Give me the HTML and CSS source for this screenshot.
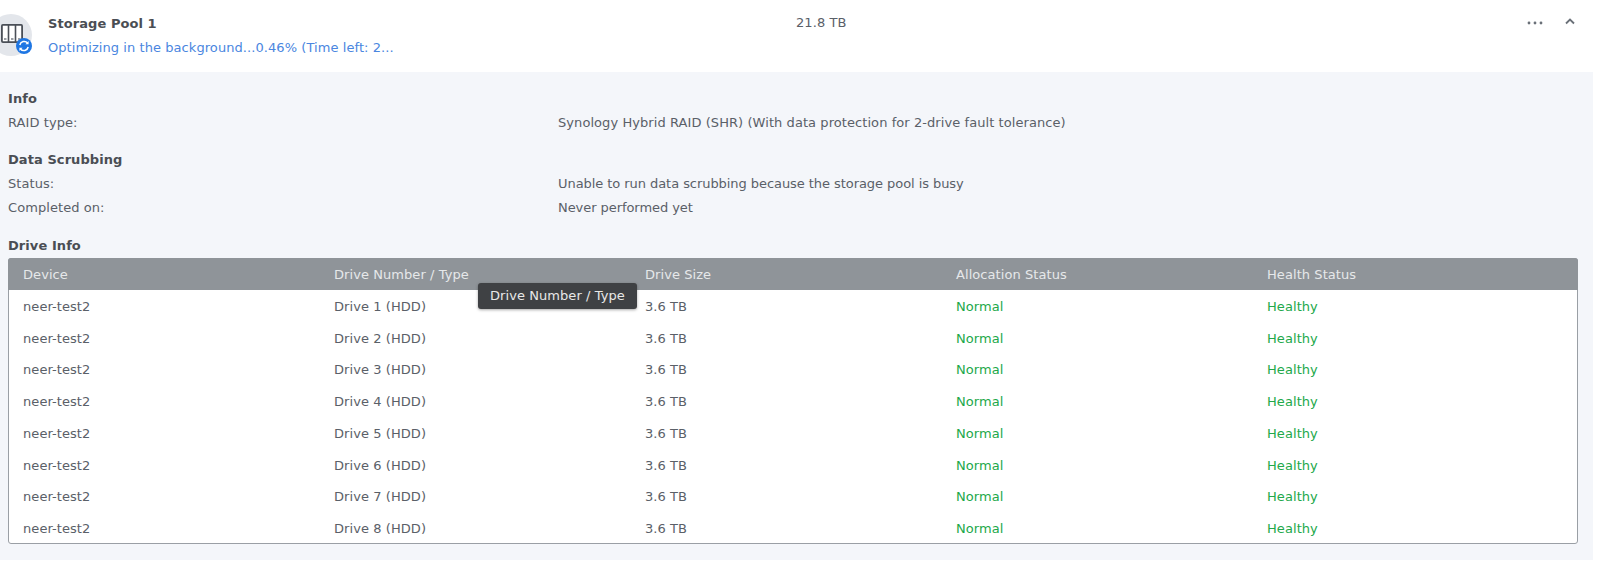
FILE: index.html
```html
<!DOCTYPE html>
<html lang="en">
<head>
<meta charset="utf-8">
<title>Storage Pool 1</title>
<link rel="stylesheet" href="styles.css">
</head>
<body>
<div class="panel">
  <header class="pool">
    <div class="pool-icon">
      <svg width="34" height="42" viewBox="0 0 34 42">
        <circle cx="11" cy="21" r="21" fill="#e3e6eb"/>
        <rect x="1.900" y="10.900" width="20.200" height="17.200" rx="1" fill="#fff" stroke="#4a4f57" stroke-width="1.800"/>
        <path d="M8.500 11v17M15.500 11v17" stroke="#4a4f57" stroke-width="1.600"/>
        <path d="M4 25h2.500M11 25h2.500M18 25h2.500" stroke="#7b8088" stroke-width="1.600"/>
        <circle cx="24" cy="32" r="8" fill="#1e76e3"/>
        <path d="M19.800 31a4.500 4.500 0 0 1 7.800-2M28.200 33a4.500 4.500 0 0 1-7.800 2" fill="none" stroke="#fff" stroke-width="1.500"/>
        <path d="M28.600 27v3.200h-3.200zM19.400 37v-3.200h3.200z" fill="#fff"/>
      </svg>
    </div>
    <div class="pool-name">
      <div class="title">Storage Pool 1</div>
      <div class="progress">Optimizing in the background...0.46% (Time left: 2...</div>
    </div>
    <div class="pool-size">21.8 TB</div>
    <div class="pool-actions">
      <svg class="more" width="16" height="4" viewBox="0 0 16 4"><circle cx="2" cy="2" r="1.400"/><circle cx="8" cy="2" r="1.400"/><circle cx="14" cy="2" r="1.400"/></svg>
      <svg class="collapse" width="12" height="8" viewBox="0 0 12 8"><path d="M2 6.500 6 2.500l4 4"/></svg>
    </div>
  </header>
  <section class="details">
    <h3 class="heading">Info</h3>
    <div class="info-row"><span class="key">RAID type:</span><span>Synology Hybrid RAID (SHR) (With data protection for 2-drive fault tolerance)</span></div>
    <h3 class="heading spaced">Data Scrubbing</h3>
    <div class="info-row"><span class="key">Status:</span><span class="tight">Unable to run data scrubbing because the storage pool is busy</span></div>
    <div class="info-row"><span class="key">Completed on:</span><span class="tight">Never performed yet</span></div>
    <h3 class="heading spaced last">Drive Info</h3>
    <div class="table">
      <div class="row head"><span>Device</span><span class="has-tip">Drive Number / Type<span class="tip">Drive Number / Type</span></span><span>Drive Size</span><span>Allocation Status</span><span>Health Status</span></div>
      <div class="row"><span>neer-test2</span><span>Drive 1 (HDD)</span><span>3.6 TB</span><span class="ok">Normal</span><span class="ok">Healthy</span></div>
      <div class="row"><span>neer-test2</span><span>Drive 2 (HDD)</span><span>3.6 TB</span><span class="ok">Normal</span><span class="ok">Healthy</span></div>
      <div class="row"><span>neer-test2</span><span>Drive 3 (HDD)</span><span>3.6 TB</span><span class="ok">Normal</span><span class="ok">Healthy</span></div>
      <div class="row"><span>neer-test2</span><span>Drive 4 (HDD)</span><span>3.6 TB</span><span class="ok">Normal</span><span class="ok">Healthy</span></div>
      <div class="row"><span>neer-test2</span><span>Drive 5 (HDD)</span><span>3.6 TB</span><span class="ok">Normal</span><span class="ok">Healthy</span></div>
      <div class="row"><span>neer-test2</span><span>Drive 6 (HDD)</span><span>3.6 TB</span><span class="ok">Normal</span><span class="ok">Healthy</span></div>
      <div class="row"><span>neer-test2</span><span>Drive 7 (HDD)</span><span>3.6 TB</span><span class="ok">Normal</span><span class="ok">Healthy</span></div>
      <div class="row"><span>neer-test2</span><span>Drive 8 (HDD)</span><span>3.6 TB</span><span class="ok">Normal</span><span class="ok">Healthy</span></div>
    </div>
  </section>
</div>
</body>
</html>
```
FILE: styles.css
```css
* { box-sizing: border-box; }
html, body { margin: 0; height: 100%; background: #fff; }
body {
  font-family: "DejaVu Sans", sans-serif;
  font-size: 13px;
  letter-spacing: 0.07px;
  line-height: 20px;
  color: #5a6068;
  overflow: hidden;
}
.panel { width: 1593px; }
.pool { display: flex; height: 72px; background: #fff; }
.pool-icon { width: 48px; padding-top: 14px; }
.pool-icon svg { display: block; }
.pool-name { width: 748px; padding-top: 14px; }
.title { font-weight: 700; color: #4a4e54; height: 24px; }
.progress { color: #4a86e0; }
.pool-size { width: 731px; padding-top: 13px; }
.pool-actions { display: flex; align-items: flex-start; padding-top: 21px; gap: 21px; }
.more { fill: #6a7078; }
.collapse { fill: none; stroke: #6a7078; stroke-width: 1.800; margin-top: -4px; }
.details { background: #f4f6fa; height: 488px; padding: 17px 15px 0 8px; }
.heading { margin: 0; font-size: 13px; line-height: 20px; font-weight: 700; color: #4a4e54; height: 24px; }
.heading.spaced { margin-top: 13px; }
.heading.last { margin-top: 14px; height: 23px; }
.info-row { display: flex; height: 24px; }
.key { width: 550px; }
.tight { letter-spacing: -0.06px; }
.table {
  margin-top: -1px;
  background: #fff;
  border: 1px solid #9a9fa5;
  border-radius: 3px;
  height: 286px;
}
.row {
  display: grid;
  grid-template-columns: repeat(5, 311px);
  height: 31.75px;
  align-items: center;
  padding: 2px 0 0 14px;
}
.head {
  height: 32px;
  margin: -1px -1px 0;
  padding-left: 15px;
  background: #8f9499;
  color: #e6e8ea;
  border-radius: 3px 3px 0 0;
}
.ok { color: #22a84a; }
.has-tip { position: relative; }
.tip {
  position: absolute;
  left: 144px;
  top: 18px;
  height: 26px;
  padding: 3px 12px;
  white-space: nowrap;
  background: #3f4144;
  color: #e8e8e8;
  border-radius: 3px;
  box-shadow: 0 1px 3px rgba(0, 0, 0, .35);
}
```
